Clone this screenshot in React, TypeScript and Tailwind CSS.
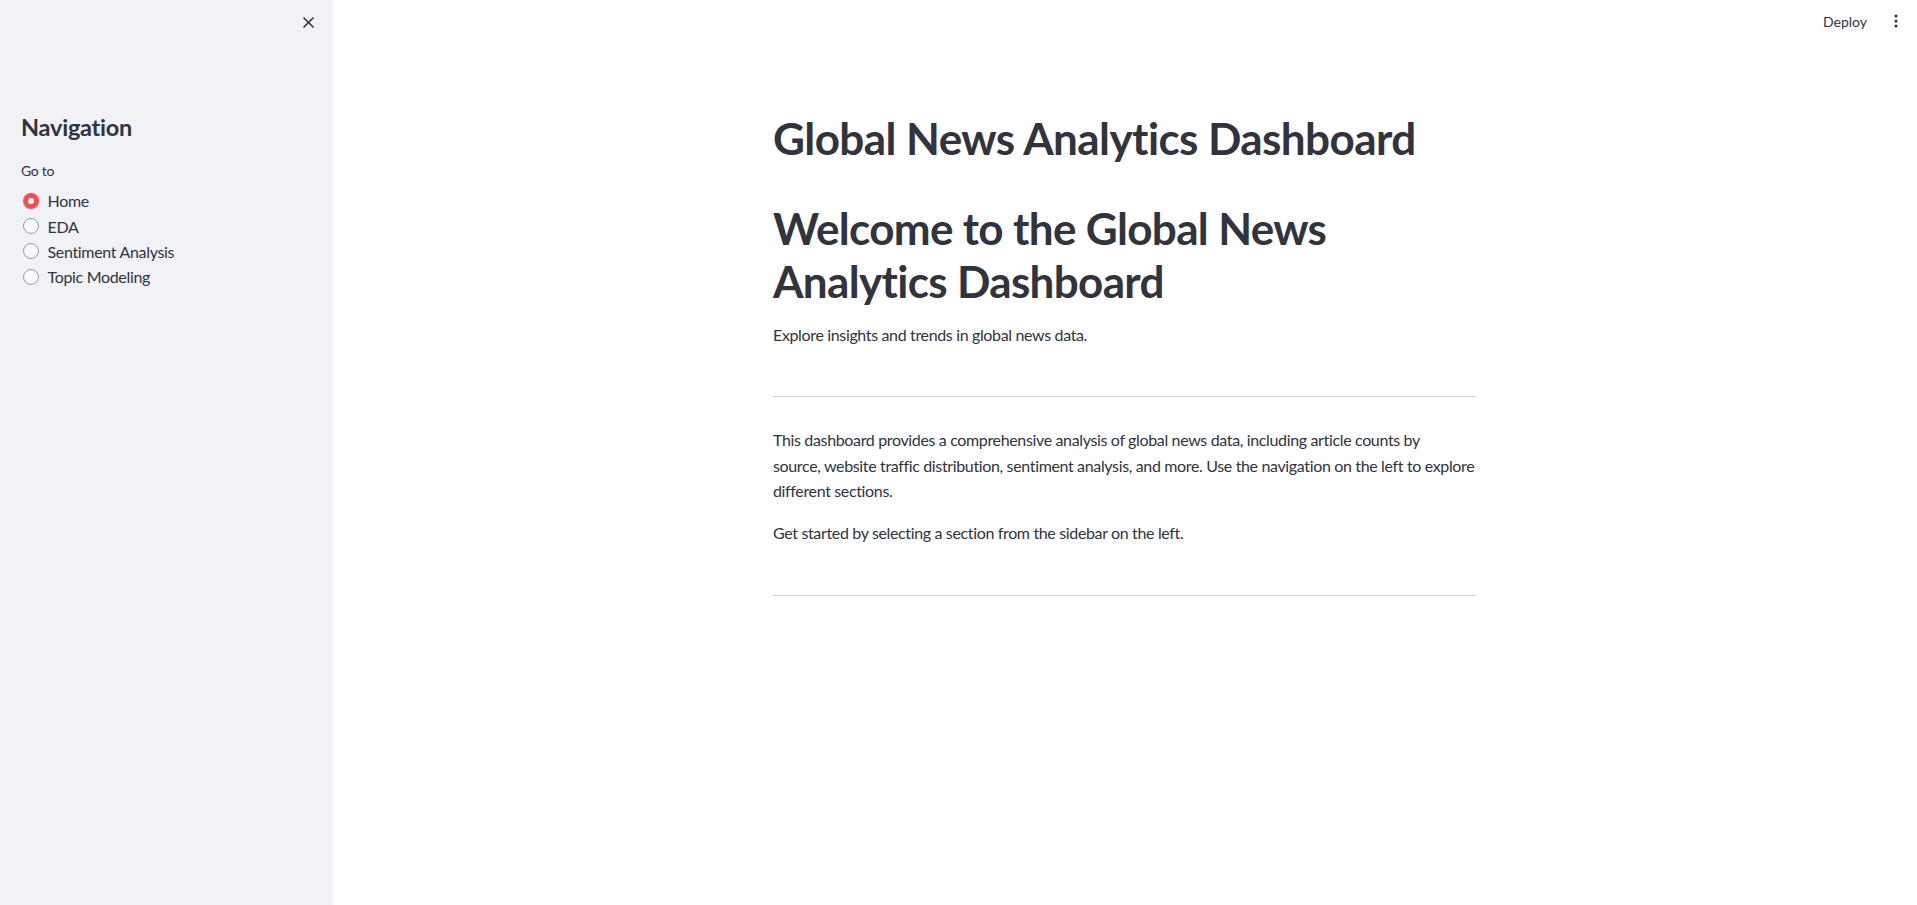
import React from "react";

const pages = ["Home", "EDA", "Sentiment Analysis", "Topic Modeling"];

function Radio({ label, checked }: { label: string; checked?: boolean }) {
  return (
    <div className="flex h-[25.3px] items-center gap-[9px]">
      {checked ? (
        <span className="flex h-4 w-4 shrink-0 items-center justify-center rounded-full bg-[#ff4b4b]">
          <span className="h-[6px] w-[6px] rounded-full bg-white" />
        </span>
      ) : (
        <span className="h-4 w-4 shrink-0 rounded-full border border-[#979aa3] bg-[#f8f9fb]" />
      )}
      <span className="text-[16px] leading-[25px] tracking-[-0.02em]">{label}</span>
    </div>
  );
}

export default function App() {
  return (
    <div className="flex h-[905px] w-full overflow-hidden bg-white font-[family-name:Lato,sans-serif] text-[#31333f]">
      {/* sidebar */}
      <aside className="flex w-[333px] shrink-0 flex-col bg-[#f0f2f6] pl-[21px]">
        <div className="flex justify-end pr-[15px] pt-[12.5px]">
          <svg width="19" height="19" viewBox="0 0 24 24" fill="#31333f">
            <path d="M19 6.41L17.59 5 12 10.59 6.41 5 5 6.41 10.59 12 5 17.59 6.41 19 12 13.41 17.59 19 19 17.59 13.41 12z" />
          </svg>
        </div>
        <h2 className="mt-[81.5px] text-[23.5px] font-bold leading-[28.8px] tracking-[-0.01em]">Navigation</h2>
        <div className="mt-[17.8px] text-[14px] leading-[22px] tracking-[-0.02em]">Go to</div>
        <div className="ml-[1.5px] mt-[6.5px] flex flex-col">
          {pages.map((p, i) => (
            <Radio key={p} label={p} checked={i === 0} />
          ))}
        </div>
      </aside>

      {/* main */}
      <main className="flex grow flex-col">
        <header className="flex h-[42px] items-center justify-end pr-[19.5px]">
          <span className="text-[14px]">Deploy</span>
          <svg className="ml-[26.5px]" width="4" height="14" viewBox="0 0 4 14" fill="#31333f">
            <circle cx="2" cy="2" r="1.6" />
            <circle cx="2" cy="7" r="1.6" />
            <circle cx="2" cy="12" r="1.6" />
          </svg>
        </header>

        <div className="mx-auto flex w-[704px] flex-col">
          <h1 className="mt-[69.6px] text-[44px] font-bold leading-[52.8px] tracking-[-0.013em]">
            Global News Analytics Dashboard
          </h1>
          <h1 className="mt-[37.8px] text-[44px] font-bold leading-[52.8px] tracking-[-0.015em]">
            Welcome to the Global News Analytics Dashboard
          </h1>
          <p className="mt-[14.4px] text-[16px] leading-[25.6px] tracking-[-0.022em]">
            Explore insights and trends in global news data.
          </p>
          <hr className="mt-[48.2px] h-px border-0 bg-[#d6d6d9]" />
          <p className="mt-[30.2px] text-[16px] leading-[25.6px] tracking-[-0.022em]">
            This dashboard provides a comprehensive analysis of global news data, including article counts by
            <br />
            source, website traffic distribution, sentiment analysis, and more. Use the navigation on the left to explore
            <br />
            different sections.
          </p>
          <p className="mt-4 text-[16px] leading-[25.6px] tracking-[-0.022em]">
            Get started by selecting a section from the sidebar on the left.
          </p>
          <hr className="mt-[49.4px] h-px border-0 bg-[#d6d6d9]" />
        </div>
      </main>
    </div>
  );
}
